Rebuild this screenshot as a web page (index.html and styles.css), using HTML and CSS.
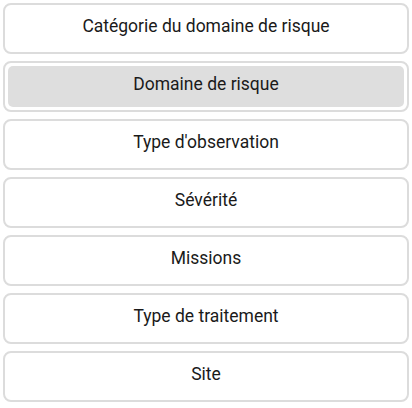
FILE: index.html
```html
<!DOCTYPE html>
<html>
<head>
<meta charset="utf-8">
<link rel="stylesheet" href="styles.css">
</head>
<body>
<div class="list">
  <div class="item"><div class="inner">Catégorie du domaine de risque</div></div>
  <div class="item selected"><div class="inner">Domaine de risque</div></div>
  <div class="item"><div class="inner">Type d'observation</div></div>
  <div class="item"><div class="inner">Sévérité</div></div>
  <div class="item"><div class="inner">Missions</div></div>
  <div class="item"><div class="inner">Type de traitement</div></div>
  <div class="item"><div class="inner">Site</div></div>
</div>
</body>
</html>
```
FILE: styles.css
```css
html, body {
  margin: 0;
  padding: 0;
  background: #ffffff;
}
body {
  font-family: Roboto, "Noto Sans", sans-serif;
  color: #1a1a1a;
}
.list {
  display: flex;
  flex-direction: column;
  gap: 7px;
  padding: 3px 3px;
}
.item {
  height: 51px;
  box-sizing: border-box;
  border: 2px solid #dcdcdc;
  border-radius: 8px;
  padding: 3px;
  display: flex;
}
.inner {
  flex: 1;
  display: flex;
  align-items: center;
  justify-content: center;
  border-radius: 5px;
  font-size: 17.5px;
  padding-bottom: 6px;
}
.selected .inner {
  background: #dedede;
}
```
